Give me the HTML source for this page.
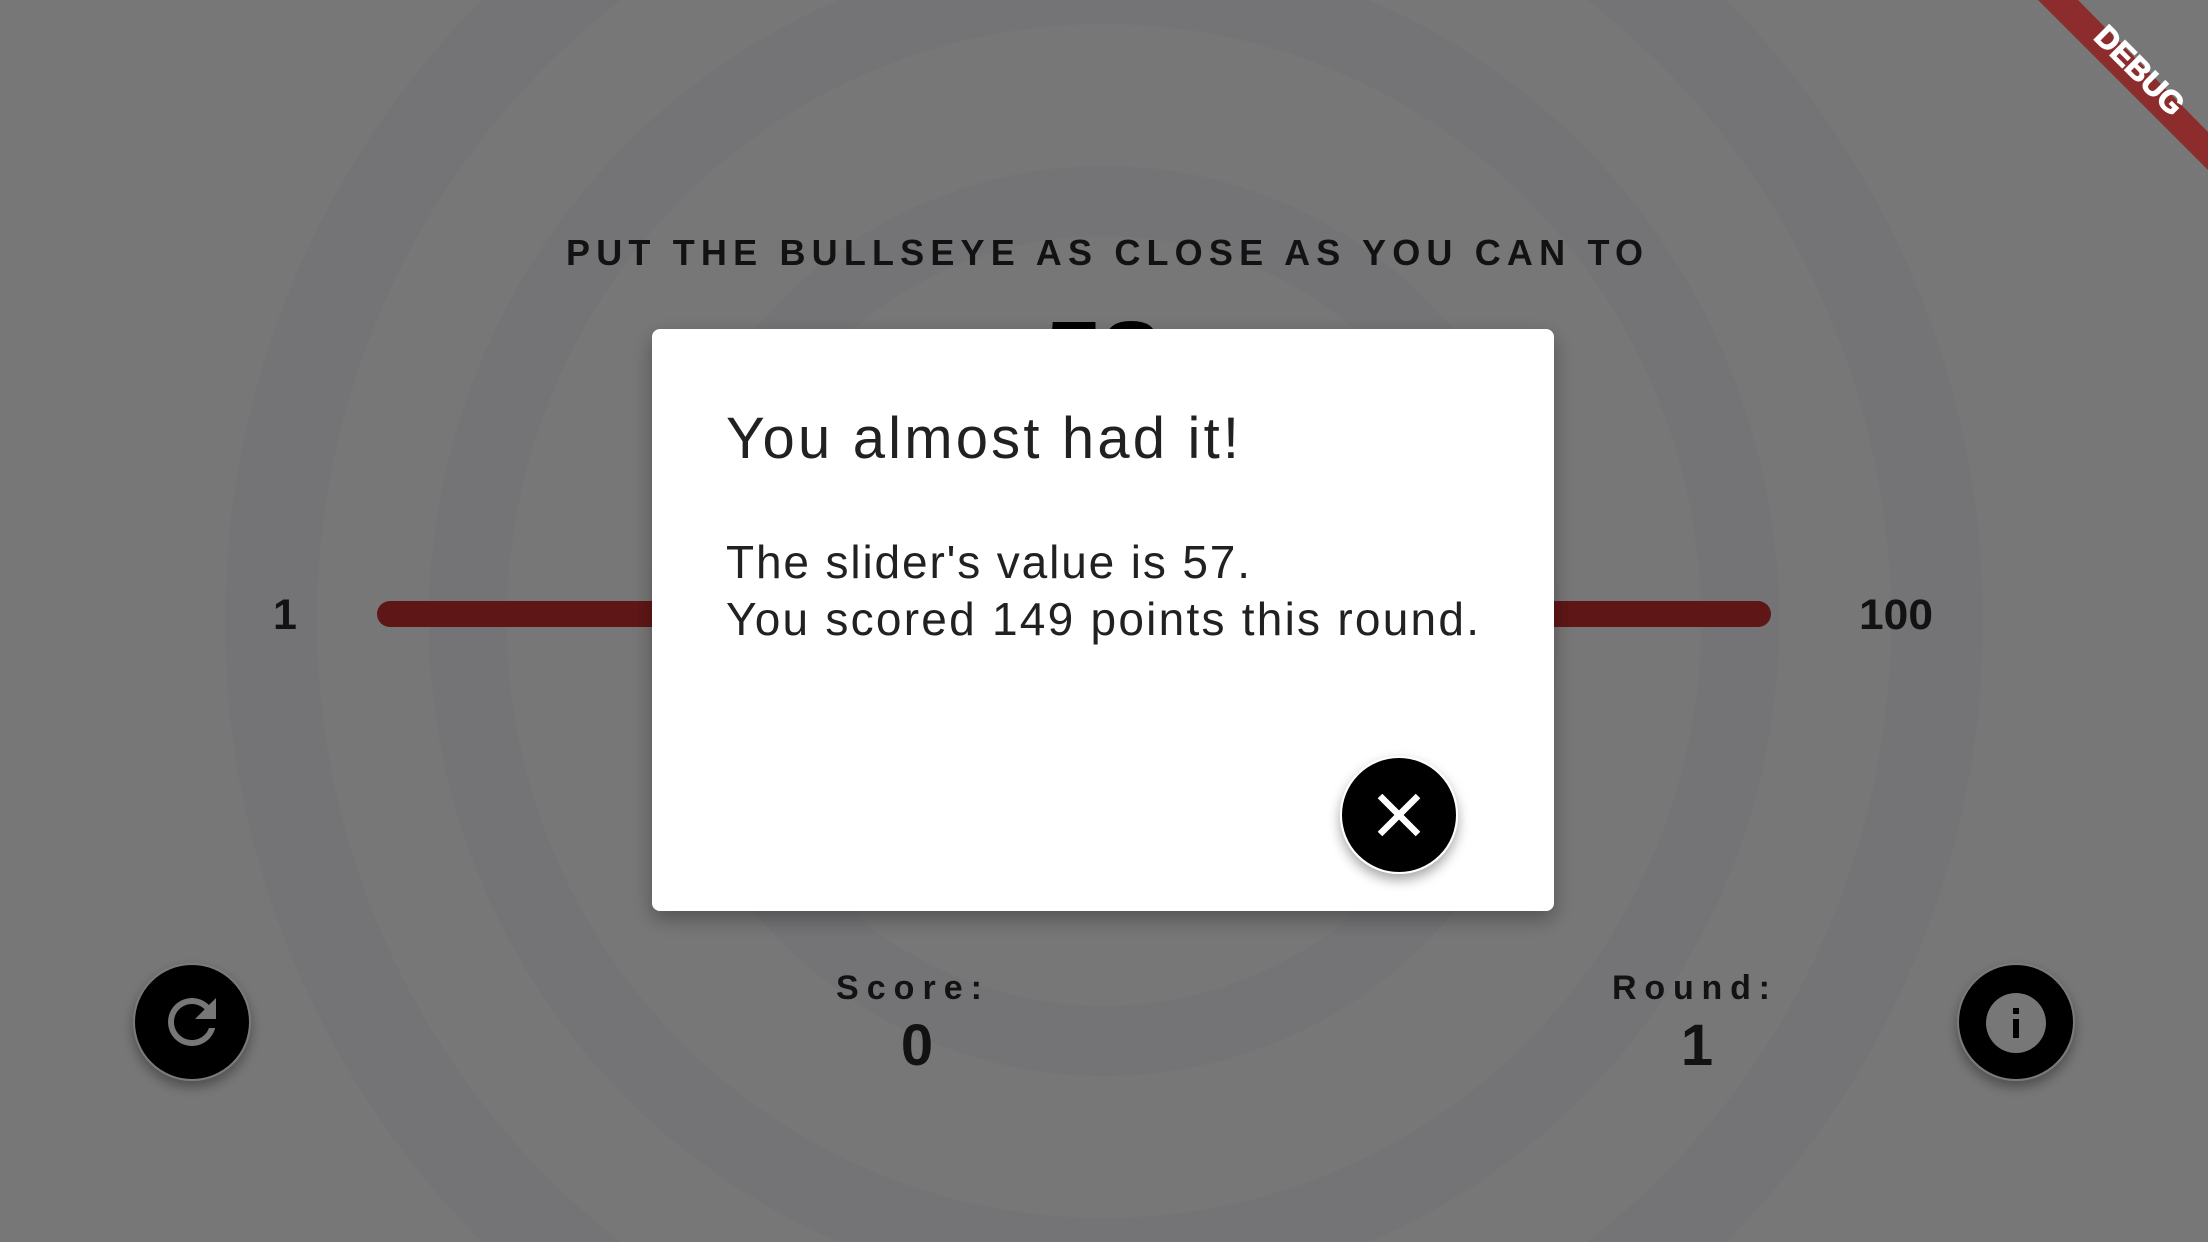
<!DOCTYPE html>
<html><head><meta charset="utf-8"><style>
html,body{margin:0;padding:0;width:2208px;height:1242px;overflow:hidden;background:#777777}
svg{display:block;position:absolute;left:0;top:0}
text{font-family:"Liberation Sans",sans-serif}
</style></head><body>
<svg width="2208" height="1242" viewBox="0 0 2208 1242" xmlns="http://www.w3.org/2000/svg">
<defs>
<filter id="sh" x="-20%" y="-20%" width="140%" height="150%"><feDropShadow dx="0" dy="6" stdDeviation="6" flood-color="#000" flood-opacity="0.35"/></filter>
<filter id="sh2" x="-10%" y="-10%" width="120%" height="130%"><feDropShadow dx="0" dy="8" stdDeviation="10" flood-color="#000" flood-opacity="0.3"/></filter>
</defs>
<rect width="2208" height="1242" fill="#777777"/>
<g fill="none" stroke="#747476">
<circle cx="1104" cy="621" r="833" stroke-width="92"/>
<circle cx="1104" cy="621" r="636" stroke-width="78"/>
<circle cx="1104" cy="621" r="420" stroke-width="70"/>
</g>
<text x="566" y="265" font-size="36" font-weight="bold" fill="#121212" textLength="1077" lengthAdjust="spacing">PUT THE BULLSEYE AS CLOSE AS YOU CAN TO</text>
<text x="1045" y="380" font-size="84" font-weight="bold" fill="#000" textLength="115" lengthAdjust="spacingAndGlyphs">58</text>
<line x1="390" y1="614" x2="660" y2="614" stroke="#5f1616" stroke-width="26" stroke-linecap="round"/>
<line x1="1540" y1="614" x2="1758" y2="614" stroke="#5f1616" stroke-width="26" stroke-linecap="round"/>
<text x="273" y="629" font-size="43" font-weight="bold" fill="#121212">1</text>
<text x="1859" y="629" font-size="43" font-weight="bold" fill="#121212" textLength="74" lengthAdjust="spacingAndGlyphs">100</text>
<text x="836" y="999" font-size="34" font-weight="bold" fill="#121212" textLength="146" lengthAdjust="spacing">Score:</text>
<text x="917" y="1065" font-size="58" font-weight="bold" fill="#121212" text-anchor="middle">0</text>
<text x="1612" y="999" font-size="34" font-weight="bold" fill="#121212" textLength="158" lengthAdjust="spacing">Round:</text>
<text x="1697" y="1065" font-size="58" font-weight="bold" fill="#121212" text-anchor="middle">1</text>
<g filter="url(#sh)">
<circle cx="192" cy="1022" r="58" fill="#000" stroke="#7a7a7a" stroke-width="2"/>
<circle cx="2016" cy="1022" r="58" fill="#000" stroke="#7a7a7a" stroke-width="2"/>
</g>
<path transform="translate(156,986) scale(3)" fill="#777" d="M17.65 6.35C16.2 4.9 14.21 4 12 4c-4.42 0-7.990 3.58-7.99 8s3.57 8 7.99 8c3.73 0 6.84-2.550 7.73-6h-2.08c-.82 2.33-3.04 4-5.65 4-3.31 0-6-2.69-6-6s2.69-6 6-6c1.66 0 3.14.69 4.22 1.78L13 11h7V4l-2.35 2.35z"/>
<circle cx="2016" cy="1023" r="30" fill="#777"/>
<rect x="2013" y="1008" width="6" height="6" fill="#000"/>
<rect x="2013" y="1019" width="6" height="19" fill="#000"/>
<rect x="652" y="329" width="902" height="582" rx="8" fill="#fff" filter="url(#sh2)"/>
<text x="726" y="458" font-size="58" fill="#212121" textLength="513" lengthAdjust="spacing">You almost had it!</text>
<text x="726" y="578" font-size="46" fill="#212121" textLength="524" lengthAdjust="spacing">The slider's value is 57.</text>
<text x="726" y="635" font-size="46" fill="#212121" textLength="753" lengthAdjust="spacing">You scored 149 points this round.</text>
<g filter="url(#sh)">
<circle cx="1399" cy="815" r="58" fill="#000" stroke="#fff" stroke-width="2"/>
</g>
<path d="M1380 796 L1418 834 M1418 796 L1380 834" stroke="#fff" stroke-width="6.5" fill="none"/>
<polygon points="2038,0 2078,0 2208,132 2208,170" fill="#8c2c2c"/>
<text x="0" y="0" transform="translate(2138,72) rotate(45)" font-size="31" font-weight="900" fill="#fff" text-anchor="middle" dominant-baseline="middle" stroke="#fff" stroke-width="1.2">DEBUG</text>
</svg>
</body></html>
